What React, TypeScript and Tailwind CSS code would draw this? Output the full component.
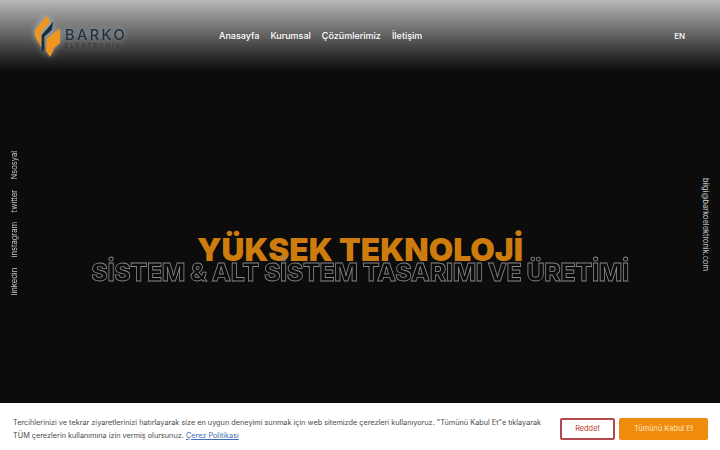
export default function App() {
  const nav = ['Anasayfa', 'Kurumsal', 'Çözümlerimiz', 'İletişim'];
  const social = ['linkedin', 'instagram', 'twitter', 'Nsosyal'];

  return (
    <div className="relative h-[450px] w-[720px] overflow-hidden bg-[#0c0c0c] font-['Inter',sans-serif] text-white">
      {/* header */}
      <header className="flex h-[72px] items-start bg-gradient-to-b from-[#b8b8b8] via-[#606060] to-[#0c0c0c] pl-[33px] pr-[35px]">
        <div className="mt-[15px] flex w-[186px] items-center">
          <div className="flex items-center drop-shadow-[0_0_3px_rgba(255,255,255,0.5)]">
            <svg width="30" height="44" viewBox="0 0 30 44">
              <path d="M14 1 L17 7 L8 17 L8 32 L2 21 L2 15 Z" fill="#f0951e" />
              <path d="M20.3 6.7 L18.7 15 L11.3 21.7 L11.3 35 L8.7 37 L8.7 20 Z" fill="#14303f" />
              <path d="M27 13.3 L27 28 L21 33 L20 36 L17 42 L13 36 L14 23.5 Z" fill="#f0951e" />
            </svg>
            <div className="ml-[2px] mt-[1px] flex flex-col">
              <span className="text-[14.5px] font-medium leading-[15px] tracking-[0.17em] text-[#1b3344]">BARKO</span>
              <span className="mt-[1px] whitespace-nowrap text-[5.5px] leading-[6px] tracking-[0.42em] text-[#24343f]">ELEKTRONİK</span>
            </div>
          </div>
        </div>
        <nav className="mt-[30px] flex gap-[11px] text-[9px] font-medium leading-[12px]">
          {nav.map((item) => (
            <a key={item}>{item}</a>
          ))}
        </nav>
        <span className="ml-auto mt-[30px] text-[8px] font-medium leading-[12px]">EN</span>
      </header>

      {/* hero */}
      <main className="flex flex-col items-center pt-[166px]">
        <h1 className="text-[31.7px] font-black leading-[24px] text-[#cf7c0e]">YÜKSEK TEKNOLOJİ</h1>
        <h2 className="text-[25px] font-extrabold leading-[20px] tracking-[-0.015em] text-transparent opacity-[0.99] [-webkit-text-stroke:0.8px_#8a8a8a]">
          SİSTEM &amp; ALT SİSTEM TASARIMI VE ÜRETİMİ
        </h2>
      </main>

      {/* side links */}
      <div className="absolute left-[9px] top-[151px] flex rotate-180 gap-[10px] text-[7.6px] leading-[11px] text-[#c8c8c8] [writing-mode:vertical-rl]">
        {social.map((item) => (
          <a key={item}>{item}</a>
        ))}
      </div>
      <a className="absolute left-[700px] top-[178px] text-[7.4px] leading-[11px] text-[#c8c8c8] [writing-mode:vertical-rl]">
        bilgi@barkoelektronik.com
      </a>

      {/* cookie bar */}
      <div className="absolute bottom-0 left-0 right-0 flex h-[47px] items-start bg-white pl-[13px] pr-[12px] pt-[14px]">
        <p className="w-[540px] text-[7.3px] leading-[12.5px] text-[#4a4a4a]">
          Tercihlerinizi ve tekrar ziyaretlerinizi hatırlayarak size en uygun deneyimi sunmak için web sitemizde çerezleri
          kullanıyoruz. "Tümünü Kabul Et"e tıklayarak TÜM çerezlerin kullanımına izin vermiş olursunuz.{' '}
          <a className="text-[#3f6fb5] underline">Çerez Politikası</a>
        </p>
        <div className="ml-auto mt-[1px] flex gap-[4px] text-[7.4px]">
          <button className="h-[22px] w-[55px] rounded-[2px] border-2 border-[#b5474f] text-[#c0392b]">Reddet</button>
          <button className="h-[22px] w-[89px] rounded-[2px] bg-[#f08c0c] text-[#fbe3c2]">Tümünü Kabul Et</button>
        </div>
      </div>
    </div>
  );
}
